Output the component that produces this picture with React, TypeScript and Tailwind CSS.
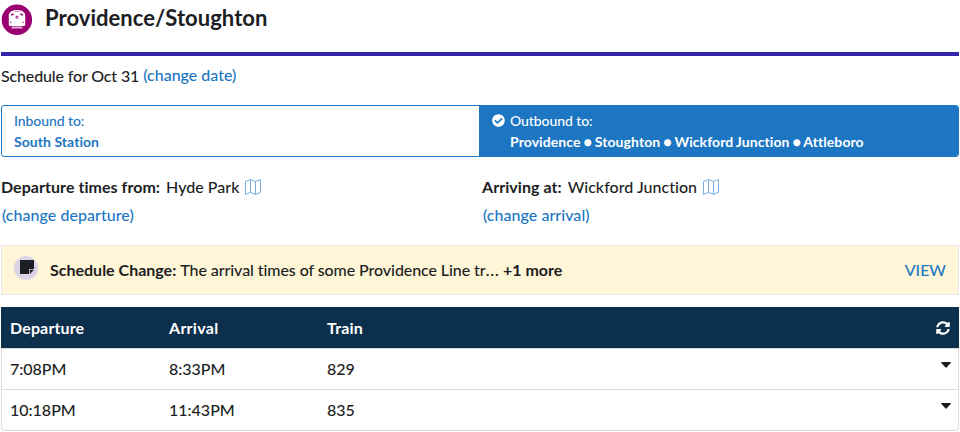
import React from "react";
import { FaCheckCircle, FaSyncAlt } from "react-icons/fa";

function TrainIcon() {
  return (
    <svg className="block h-[31px] w-[31px]" viewBox="0 0 31 31" aria-hidden="true">
      <circle cx="15.9" cy="15.7" r="15.2" fill="#9b0072" />
      <path d="M10.4 7.2Q16 4.6 21.6 7.2L23.7 9.2Q24.2 9.9 24.2 11V20.8Q24.2 22 23 22H9Q7.8 22 7.8 20.8V11Q7.8 9.9 8.3 9.2Z" fill="#fff" />
      <path d="M9.9 10L12.8 9.2V11L9.9 11.8ZM22.1 10L19.2 9.2V11L22.1 11.8Z" fill="#a8207f" />
      <path d="M13.6 7.6H18.4" stroke="#b24e97" strokeWidth="0.7" />
      <circle cx="16" cy="13.3" r="2" fill="#dfb5d2" />
      <path d="M14.9 12.7H17.1M16 12.7V14.7" stroke="#9b0072" strokeWidth="0.7" />
      <path d="M9.3 17.8H10.4V18.9H9.3ZM21.6 17.8H22.7V18.9H21.6Z" fill="#9b0072" />
      <path d="M11 22.6H21L21.8 24.5H10.2Z" fill="#e3b6d8" />
    </svg>
  );
}

function MapIcon() {
  return (
    <svg className="block h-4 w-4" viewBox="0 0 16 16" fill="none" stroke="#6ba6d9" strokeWidth="0.9" aria-hidden="true">
      <path d="M.5 2.4L5.5.6L10.5 2.4L15.5.6V13.4L10.5 15.3L5.5 13.4L.5 15.3ZM5.5.6V13.4M10.5 2.4V15.3" />
    </svg>
  );
}

function NoteIcon() {
  return (
    <svg className="block h-6 w-6" viewBox="0 0 24 24" aria-hidden="true">
      <circle cx="12" cy="12" r="12" fill="#ddd3e6" />
      <path d="M6 4H20V13H15.2V18H6Z" fill="#1c1e23" />
      <path d="M16 13.8H20L16 18Z" fill="#1c1e23" />
    </svg>
  );
}

function Stop({ label, name, change }: { label: string; name: string; change: string }) {
  return (
    <div className="flex-1">
      <div className="flex h-7 items-center">
        <span className="font-bold tracking-[0.05px]">{label}</span>
        <span className="ml-[6px] tracking-[0.03px]">{name}</span>
        <span className="ml-[6px]"><MapIcon /></span>
      </div>
      <a className="block h-7 pl-px leading-7 tracking-[0.04px] text-[#1c76c2]">{change}</a>
    </div>
  );
}

const trips = [
  { departure: "7:08PM", arrival: "8:33PM", train: "829" },
  { departure: "10:18PM", arrival: "11:43PM", train: "835" },
];

export default function App() {
  return (
    <div className="h-[432px] w-[960px] overflow-hidden bg-white pr-px pl-px font-['Lato',sans-serif] text-[16px] leading-6 font-medium text-[#1c1e23] [font-variant-ligatures:none]">
      <header className="flex h-[52px] items-start">
        <div className="mt-1"><TrainIcon /></div>
        <h1 className="mt-[3px] ml-[13px] text-[22px] leading-[30px] font-bold tracking-[0.04px]">Providence/Stoughton</h1>
      </header>
      <div className="h-1 bg-[#3323a9]" />
      <div className="mt-[6px] flex h-7 items-center">
        <span className="tracking-[-0.14px]">Schedule for Oct 31</span>
        <a className="mb-[2px] ml-1 text-[#1c76c2]">(change date)</a>
      </div>
      <div className="mt-[15px] flex h-[52px] overflow-hidden rounded-[3px] border border-[#1c76c2] text-[14px] leading-[21px] text-[#1c76c2]">
        <div className="w-[477px] pt-1 pl-3">
          <div className="tracking-[-0.08px]">Inbound to:</div>
          <div className="font-bold tracking-[0.05px]">South Station</div>
        </div>
        <div className="flex flex-1 bg-[#1c76c2] pt-1 pl-[13px] text-white">
          <FaCheckCircle className="mt-1 h-[13px] w-[13px]" />
          <div className="ml-[5px]">
            <div className="tracking-[-0.08px]">Outbound to:</div>
            <div className="font-bold tracking-[0.08px] whitespace-nowrap [word-spacing:-0.6px]">Providence ● Stoughton ● Wickford Junction ● Attleboro</div>
          </div>
        </div>
      </div>
      <div className="mt-4 flex">
        <Stop label="Departure times from:" name="Hyde Park" change="(change departure)" />
        <div className="flex flex-1 pl-1">
          <Stop label="Arriving at:" name="Wickford Junction" change="(change arrival)" />
        </div>
      </div>
      <div className="mt-4 flex h-[50px] items-center border border-[#e6e6ea] bg-[#fff5d7] pr-3 pl-3">
        <div className="mb-1"><NoteIcon /></div>
        <div className="ml-3 flex-1 whitespace-nowrap">
          <span className="font-bold">Schedule Change:</span> <span className="tracking-[-0.08px]">The arrival times of some Providence Line tr<span className="text-[18px] leading-none font-normal">…</span></span> <span className="font-bold">+1 more</span>
        </div>
        <a className="text-[#1c76c2]">VIEW</a>
      </div>
      <div className="mt-3">
        <div className="flex h-[41px] items-center bg-[#0c2f4c] pr-[9px] pl-[9px] font-bold text-white">
          <span className="w-[159px] tracking-[0.14px]">Departure</span>
          <span className="w-[158px] tracking-[0.28px]">Arrival</span>
          <span className="flex-1 tracking-[0.2px]">Train</span>
          <FaSyncAlt className="h-[14px] w-[14px]" />
        </div>
        <div className="rounded-b-[4px] border border-[#dcdcde]">
          {trips.map((trip, i) => (
            <div key={trip.train} className={i === 0 ? "flex h-10 items-center pr-[7px] pl-2" : "flex h-[41px] items-center border-t border-[#dcdcde] pr-[7px] pl-2"}>
              <span className="w-[159px]">{trip.departure}</span>
              <span className="w-[158px]">{trip.arrival}</span>
              <span className="flex-1">{trip.train}</span>
              <svg className="mb-2 h-[6px] w-[10px]" viewBox="0 0 10 6" fill="#1c1e23" aria-hidden="true"><path d="M.5 0H9.5Q10 .3 9.7.9L5.5 5.6Q5 6 4.5 5.6L.3.9Q0 .3.5 0Z" /></svg>
            </div>
          ))}
        </div>
      </div>
    </div>
  );
}
